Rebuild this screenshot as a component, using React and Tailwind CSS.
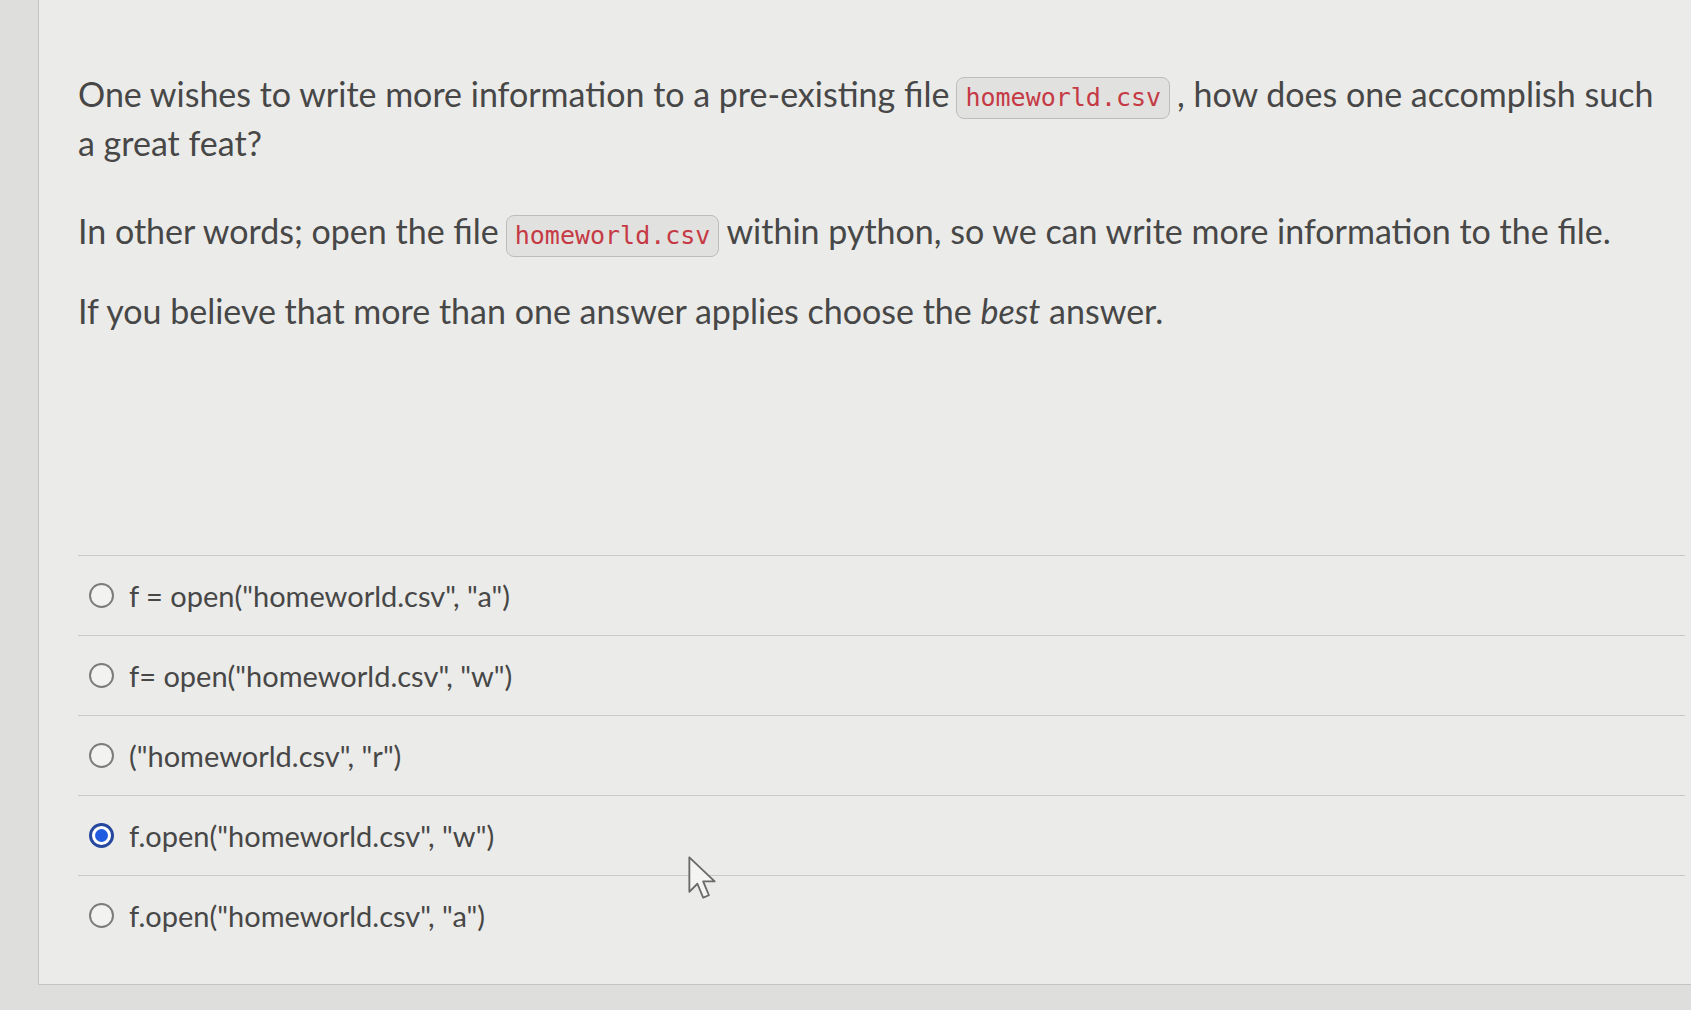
import React from 'react';

function Code({ children }) {
    return (
        <code className="mx-[7px] inline-block rounded-[8px] border border-[#bdbdbb] bg-[#e1e1df] px-[8px] py-[3px] align-middle font-['DejaVu_Sans_Mono',monospace] text-[25px] leading-[34px] text-[#c53a44]">
            {children}
        </code>
    );
}

function Radio({ checked }) {
    if (checked) {
        return (
            <span className="flex h-[25px] w-[25px] shrink-0 items-center justify-center rounded-full border-[3px] border-[#25479e] bg-white">
                <span className="h-[13px] w-[13px] rounded-full bg-[#1f5be0]" />
            </span>
        );
    }
    return <span className="h-[25px] w-[25px] shrink-0 rounded-full border-[2.5px] border-[#7c7c7a] bg-[#f2f2f0]" />;
}

const options = [
    { label: 'f = open("homeworld.csv", "a")', checked: false },
    { label: 'f= open("homeworld.csv", "w")', checked: false },
    { label: '("homeworld.csv", "r")', checked: false },
    { label: 'f.open("homeworld.csv", "w")', checked: true },
    { label: 'f.open("homeworld.csv", "a")', checked: false },
];

export default function App() {
    return (
        <div className="h-[1010px] w-full overflow-hidden bg-[#dededc] font-['Lato',sans-serif] text-[#474747]">
            <div className="relative ml-[38px] h-[985px] border-b border-l border-[#c4c4c2] bg-[#ebebe9] pl-[39px] pr-[6px] pt-[70px]">
                <div className="pr-[30px]">
                    <p className="text-[34px] leading-[48px]">
                        One wishes to write more information to a pre-existing file<Code>homeworld.csv</Code>, how does one accomplish such a great feat?
                    </p>
                    <p className="mt-[40px] text-[34px] leading-[48px]">
                        In other words; open the file<Code>homeworld.csv</Code>within python, so we can write more information to the file.
                    </p>
                    <p className="mt-[30px] text-[34px] leading-[48px]">
                        If you believe that more than one answer applies choose the <em>best</em> answer.
                    </p>
                </div>

                <div className="mt-[220px]">
                    {options.map((o) => (
                        <div key={o.label} className="flex h-[80px] items-center gap-[15px] border-t border-[#c9c9c7] pl-[11px]">
                            <Radio checked={o.checked} />
                            <span className="text-[29px] leading-none">{o.label}</span>
                        </div>
                    ))}
                </div>

                <svg className="absolute left-[648px] top-[855px]" width="30" height="46" viewBox="0 0 26 40">
                    <path d="M2 2 L2 32 L9 25 L14 37 L19 35 L14 23 L24 23 Z" fill="#f4f4f2" stroke="#6a6a6a" strokeWidth="1.6" strokeLinejoin="round" />
                </svg>
            </div>
        </div>
    );
}
